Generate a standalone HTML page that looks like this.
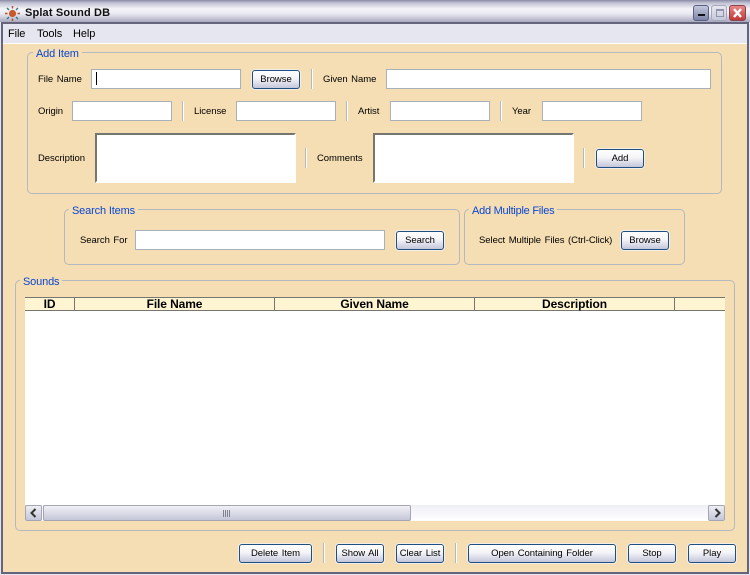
<!DOCTYPE html>
<html><head><meta charset="utf-8"><style>
html,body{margin:0;padding:0}
body{width:750px;height:575px;position:relative;overflow:hidden;background:#f5deb3;font-family:"Liberation Sans",sans-serif;font-size:9.5px;color:#000}
div{position:absolute;box-sizing:border-box}
.t{white-space:nowrap;line-height:12px;letter-spacing:-.05px;word-spacing:1px;margin-top:1px}
.m{font-size:11px;line-height:13px;letter-spacing:-.1px}
.g{border:1px solid #b4b8c0;border-radius:5px}
.lg{color:#0a46d2;font-size:11px;line-height:13px;background:#f5deb3;padding:0 3px;white-space:nowrap;letter-spacing:-.15px;margin-top:1px}
.i{background:#fff;border:1px solid #a8b0b8}
.a{background:#fff;border:2px solid;border-color:#77766e #fff #fff #77766e}
.b{height:19px;border:1px solid #1f4f80;border-radius:3px;background:linear-gradient(#fff 0,#f4f4f8 45%,#c4c6da 100%);box-shadow:0 0 0 1px #f3eee6;text-align:center;line-height:18px;font-size:9.5px;letter-spacing:-.05px;word-spacing:1px;white-space:nowrap}
.s{width:2px;background:linear-gradient(90deg,#b4b8c0 50%,#fff 50%)}
.h{top:297px;height:14px;background:#fff5d2;border-top:1px solid #77766e;border-bottom:1px solid #77766e;border-right:1px solid #77766e;text-align:center;font-weight:bold;font-size:12px;line-height:13px;letter-spacing:-.1px}
</style></head><body>
<div style="left:0;top:0;width:750px;height:24px;background:linear-gradient(#8a8aa6 0,#c2c2d4 3px,#f4f4f8 9px,#e8e8f0 14px,#a8a8c0 22px)"></div>
<div style="left:0;top:22px;width:1px;height:553px;background:#e4e4ec"></div>
<div style="left:749px;top:22px;width:1px;height:553px;background:#e4e4ec"></div>
<div style="left:0;top:574px;width:750px;height:1px;background:#e4e4ec"></div>
<div style="left:1px;top:22px;width:748px;height:552px;border:2px solid #64647c"></div>
<svg style="position:absolute;left:4px;top:5px" width="17" height="17" viewBox="0 0 17 17"><circle cx="8.5" cy="8.5" r="3.6" fill="#c8592a"/><g stroke-width="1.4" fill="none"><path d="M8.5 1v2.5M8.5 13.5v2.5" stroke="#b05030"/><path d="M1 8.5h2.5M13.5 8.5h2.5" stroke="#b05030"/><path d="M3 3l2 2M12 12l2 2" stroke="#2f7a80"/><path d="M14 3l-2 2M5 12l-2 2" stroke="#2f7a80"/></g></svg>
<div style="left:25px;top:6px;font-weight:bold;font-size:11px;line-height:14px;color:#111;white-space:nowrap;letter-spacing:.15px">Splat Sound DB</div>
<div style="left:693px;top:5px;width:16px;height:16px;border:1px solid #5a6080;border-radius:3px;background:linear-gradient(#c4c8dc,#7c84a8)"><div style="left:4px;top:8px;width:7px;height:2px;background:#111"></div></div>
<div style="left:711px;top:5px;width:16px;height:16px;border:1px solid #a4a8bc;border-radius:3px;background:linear-gradient(#e8e8f0,#c4c8d8)"><div style="left:4px;top:3px;width:8px;height:8px;border:1px solid #9094aa;border-top-width:2px"></div></div>
<div style="left:729px;top:5px;width:17px;height:16px;border:1px solid #8c4048;border-radius:3px;background:linear-gradient(#e88888,#c03838)"><svg style="position:absolute;left:2px;top:1px" width="11" height="12" viewBox="0 0 11 12"><path d="M2 2l7 8M9 2l-7 8" stroke="#fff" stroke-width="2.4"/></svg></div>

<div style="left:3px;top:24px;width:744px;height:20px;background:#e6e6f0;border-bottom:1px solid #fff"></div>
<div class="t m" style="left:8px;top:27px">File</div>
<div class="t m" style="left:37px;top:27px">Tools</div>
<div class="t m" style="left:73px;top:27px">Help</div>

<div class="g" style="left:27px;top:52px;width:695px;height:142px"></div>
<div class="lg" style="left:33px;top:47px">Add Item</div>
<div class="t" style="left:38px;top:73px">File Name</div>
<div class="i" style="left:91px;top:69px;width:150px;height:20px"><div style="left:4px;top:2px;width:1px;height:13px;background:#000"></div></div>
<div class="b" style="left:252px;top:70px;width:48px">Browse</div>
<div class="s" style="left:311px;top:69px;height:20px"></div>
<div class="t" style="left:323px;top:73px">Given Name</div>
<div class="i" style="left:386px;top:69px;width:325px;height:20px"></div>

<div class="t" style="left:38px;top:105px">Origin</div>
<div class="i" style="left:72px;top:101px;width:100px;height:20px"></div>
<div class="s" style="left:182px;top:101px;height:20px"></div>
<div class="t" style="left:194px;top:105px">License</div>
<div class="i" style="left:236px;top:101px;width:100px;height:20px"></div>
<div class="s" style="left:346px;top:101px;height:20px"></div>
<div class="t" style="left:358px;top:105px">Artist</div>
<div class="i" style="left:390px;top:101px;width:100px;height:20px"></div>
<div class="s" style="left:500px;top:101px;height:20px"></div>
<div class="t" style="left:512px;top:105px">Year</div>
<div class="i" style="left:542px;top:101px;width:100px;height:20px"></div>

<div class="t" style="left:38px;top:152px">Description</div>
<div class="a" style="left:95px;top:133px;width:201px;height:50px"></div>
<div class="s" style="left:305px;top:148px;height:20px"></div>
<div class="t" style="left:317px;top:152px">Comments</div>
<div class="a" style="left:373px;top:133px;width:201px;height:50px"></div>
<div class="s" style="left:583px;top:148px;height:20px"></div>
<div class="b" style="left:596px;top:149px;width:48px">Add</div>

<div class="g" style="left:64px;top:209px;width:396px;height:56px"></div>
<div class="lg" style="left:69px;top:204px">Search Items</div>
<div class="t" style="left:80px;top:234px">Search For</div>
<div class="i" style="left:135px;top:230px;width:250px;height:20px"></div>
<div class="b" style="left:396px;top:231px;width:48px">Search</div>

<div class="g" style="left:464px;top:209px;width:221px;height:56px"></div>
<div class="lg" style="left:469px;top:204px;letter-spacing:-.25px">Add Multiple Files</div>
<div class="t" style="left:479px;top:234px">Select Multiple Files (Ctrl-Click)</div>
<div class="b" style="left:621px;top:231px;width:48px">Browse</div>

<div class="g" style="left:15px;top:280px;width:720px;height:251px"></div>
<div class="lg" style="left:20px;top:275px">Sounds</div>
<div style="left:25px;top:311px;width:700px;height:194px;background:#fff"></div>
<div class="h" style="left:25px;width:50px">ID</div>
<div class="h" style="left:75px;width:200px">File Name</div>
<div class="h" style="left:275px;width:200px">Given Name</div>
<div class="h" style="left:475px;width:200px">Description</div>
<div class="h" style="left:675px;width:50px;border-right:0"></div>

<div style="left:25px;top:505px;width:700px;height:16px;background:linear-gradient(#eeeef6,#fff)"></div>
<div style="left:25px;top:505px;width:17px;height:16px;border:1px solid #a4a6b4;border-radius:2px;background:linear-gradient(#eeeef4,#c4c6d8)"><svg style="position:absolute;left:3px;top:2px" width="9" height="10" viewBox="0 0 9 10"><path d="M6.5 1L2.5 5l4 4" fill="none" stroke="#333" stroke-width="2"/></svg></div>
<div style="left:43px;top:505px;width:368px;height:16px;border:1px solid #a4a6b4;border-radius:2px;background:linear-gradient(#f0f0f5,#c4c6d8)"><svg style="position:absolute;left:179px;top:4px" width="9" height="7"><path d="M.5 0v7M2.5 0v7M4.5 0v7M6.5 0v7" stroke="#80828f"/></svg></div>
<div style="left:708px;top:505px;width:17px;height:16px;border:1px solid #a4a6b4;border-radius:2px;background:linear-gradient(#eeeef4,#c4c6d8)"><svg style="position:absolute;left:4px;top:2px" width="9" height="10" viewBox="0 0 9 10"><path d="M2.5 1l4 4-4 4" fill="none" stroke="#333" stroke-width="2"/></svg></div>

<div class="b" style="left:239px;top:544px;width:73px">Delete Item</div>
<div class="s" style="left:323px;top:543px;height:20px"></div>
<div class="b" style="left:336px;top:544px;width:48px">Show All</div>
<div class="b" style="left:396px;top:544px;width:48px">Clear List</div>
<div class="s" style="left:455px;top:543px;height:20px"></div>
<div class="b" style="left:468px;top:544px;width:148px">Open Containing Folder</div>
<div class="b" style="left:628px;top:544px;width:48px">Stop</div>
<div class="b" style="left:688px;top:544px;width:48px">Play</div>
</body></html>
